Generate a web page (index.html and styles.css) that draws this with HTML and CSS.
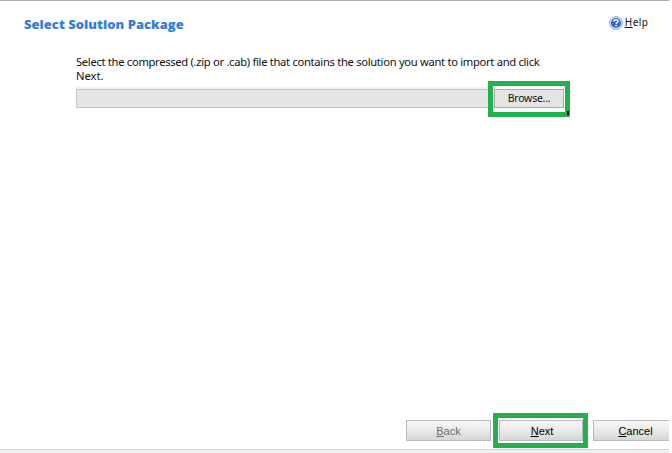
FILE: index.html
```html
<!DOCTYPE html>
<html lang="en">
<head>
<meta charset="utf-8">
<title>Select Solution Package</title>
<link rel="stylesheet" href="styles.css">
</head>
<body>
<div class="dialog">
  <header class="header">
    <h1 class="title">Select Solution Package</h1>
    <a class="help">
      <svg class="help-icon" viewBox="0 0 14 14" width="14" height="14">
        <circle cx="7" cy="7" r="6.4" fill="#e6eefb" stroke="#7d9bd0" stroke-width="0.9"/>
        <circle cx="7" cy="7" r="5.1" fill="#2f6ad8"/>
        <path d="M3 5.5A4.3 4.3 0 0 1 11 5.5Q7 3.5 3 5.5Z" fill="#6d9df0"/>
        <path d="M5.1 5.6Q5.1 3.9 7 3.9T8.9 5.5Q8.9 6.4 7.8 6.9Q7.1 7.3 7.1 8.2" fill="none" stroke="#fff" stroke-width="1.4"/>
        <rect x="6.3" y="9" width="1.5" height="1.5" fill="#fff"/>
      </svg>
      <span class="help-text"><u>H</u>elp</span>
    </a>
  </header>
  <main class="content">
    <p class="prompt"><span class="line first">Select the compressed (.zip or .cab) file that contains the solution you want to import and click</span><span class="line">Next.</span></p>
    <div class="picker">
      <div class="path"></div>
      <div class="mark mark-browse"><button class="browse"><span>Browse...</span></button><i class="handle"></i></div>
    </div>
  </main>
  <footer class="footer">
    <button class="btn disabled"><span><u>B</u>ack</span></button>
    <div class="mark mark-next"><button class="btn"><span><u>N</u>ext</span></button></div>
    <button class="btn cancel"><span><u>C</u>ancel</span></button>
  </footer>
  <div class="status"></div>
</div>
</body>
</html>
```
FILE: styles.css
```css
* { box-sizing: border-box; }
body { margin: 0; background: #fff; overflow: hidden; }
.dialog {
  width: 669px;
  height: 453px;
  display: flex;
  flex-direction: column;
  overflow: hidden;
  border-top: 1px solid #acacac;
  background: #fff;
  font-family: "Noto Sans", sans-serif;
  color: #111;
}
.header {
  flex: none;
  height: 54px;
  display: flex;
  justify-content: space-between;
  padding: 13px 21px 0 24px;
}
.title {
  margin: 0;
  font: 800 13px/20px "Open Sans", sans-serif;
  letter-spacing: 0.02px;
  color: #2f80da;
  white-space: nowrap;
}
.help { display: flex; gap: 2px; height: 15px; }
.help-icon { display: block; margin: 2px 0 0 -1px; }
.help-text { font-size: 10px; line-height: 17px; letter-spacing: 0.5px; margin-right: -0.5px; }
.content { flex: 1; padding-left: 76px; }
.prompt { margin: 0; font-size: 11.2px; line-height: 14px; }
.line { display: block; white-space: nowrap; }
.first { letter-spacing: -0.3px; }
.picker { display: flex; height: 36px; margin-top: -2px; }
.path {
  width: 412px;
  height: 21px;
  margin-top: 6px;
  background: #e5e5e5;
  border-top: 2px solid #f0f0f0;
  box-shadow: inset 0 1px #c6c6c6, inset 1px 0 #c6c6c6, inset 0 -1px #c6c6c6;
}
.mark { position: relative; border: 5px solid #22b14c; background: #fff; }
.mark-browse { width: 82px; height: 36px; padding: 3px 1px 0; }
.browse {
  display: block;
  width: 70px;
  height: 19px;
  padding: 0;
  border: 1px solid #acacac;
  background: #e4e4e4;
  color: #111;
  font: 10.6px/17px "Noto Sans", sans-serif;
  letter-spacing: -0.3px;
}
.handle { position: absolute; right: -4px; bottom: -3px; width: 2px; height: 4px; background: #000; }
.footer { flex: none; display: flex; height: 36px; align-items: flex-start; padding-left: 406px; }
.btn {
  flex: none;
  width: 85px;
  height: 21px;
  margin-top: 7px;
  padding: 2px 0 0;
  border: 1px solid #b9bbbd;
  background: linear-gradient(#f8f8f8, #e9e9e9 50%, #d6d6d6);
  color: #000;
  font: 11px/17px "Liberation Sans", Arial, sans-serif;
}
.disabled { color: #6d6d6d; }
.mark-next { flex: none; width: 95px; height: 35px; margin: 0 5px 0 2px; padding: 2px 0 0 1px; }
.mark-next .btn { display: block; width: 84px; margin-top: 0; padding-left: 2px; }
.status { flex: none; height: 4px; border-top: 1px solid #d2d2d2; background: #f0f0f0; }
```
